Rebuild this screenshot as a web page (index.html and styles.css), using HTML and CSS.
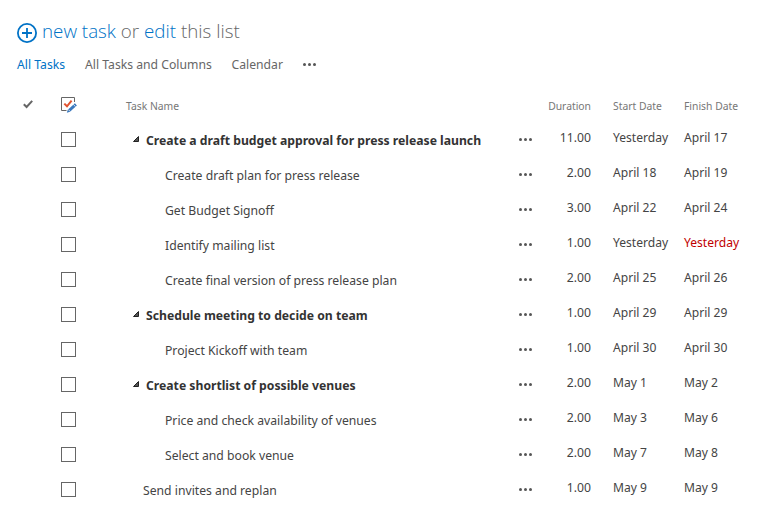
FILE: index.html
```
<!DOCTYPE html>
<html lang="en">
<head>
    <meta charset="utf-8">
    <title>Tasks</title>
    <meta name="viewport" content="width=device-width, initial-scale=1">
    <link rel="stylesheet" href="styles.css">
</head>
<body>
<svg width="0" height="0" class="defs">
    <symbol id="dots" viewBox="0 0 14 4">
        <circle cx="1.5" cy="1.5" r="1.5"/><circle cx="6.5" cy="1.5" r="1.5"/><circle cx="11.5" cy="1.5" r="1.5"/>
    </symbol>
    <symbol id="arrow" viewBox="0 0 6 6">
        <path d="M.5 5.5L5.5 .5V5.5Z" fill="#555" stroke="#222"/>
    </symbol>
</svg>

<div class="hero">
    <svg class="plus" width="20" height="20" viewBox="0 0 20 20">
        <circle cx="10" cy="10" r="9.1"/>
        <path d="M10 5v10M5 10h10"/>
    </svg>
    <div class="hero-text"><a>new task</a> or <a>edit</a> this list</div>
</div>

<div class="views">
    <a class="view-1 selected">All Tasks</a>
    <a class="view-2">All Tasks and Columns</a>
    <a class="view-3">Calendar</a>
    <svg class="dots" width="14" height="4"><use href="#dots"/></svg>
</div>

<table class="tasks">
    <colgroup>
        <col class="col-select"><col class="col-done"><col class="col-name"><col class="col-menu">
        <col class="col-duration"><col class="col-start"><col class="col-finish">
    </colgroup>
    <thead>
    <tr>
        <th class="select">
            <svg width="12" height="10" viewBox="0 0 12 10"><path d="M1.8 5.2L4.6 8L10.2 1.8" fill="none" stroke="#666" stroke-width="2"/></svg>
        </th>
        <th class="edit">
            <svg width="17" height="17" viewBox="0 0 17 17">
                <path d="M13.5 5V.5H.5v13H5.5" fill="none" stroke="#666"/>
                <path d="M3.3 6.6L6 9.3L10.6 3.6" fill="none" stroke="#e2532f" stroke-width="2"/>
                <path d="M13.9 6.2L15.9 8.4L9 14.7L5.8 15.7L6.8 12.7Z" fill="#3a78bd"/>
                <path d="M7.3 12.6L9 14.3M12.4 7.4L14.4 9.6" stroke="#fff" stroke-width=".8"/>
            </svg>
        </th>
        <th>Task Name</th>
        <th></th>
        <th class="num">Duration</th>
        <th class="start">Start Date</th>
        <th>Finish Date</th>
    </tr>
    </thead>
    <tbody>
    <tr>
        <td colspan="2" class="done"><span class="box"></span></td>
        <td class="name summary"><svg width="6" height="6"><use href="#arrow"/></svg>Create a draft budget approval for press release launch</td>
        <td><svg class="dots" width="14" height="4"><use href="#dots"/></svg></td>
        <td class="num">11.00</td><td class="date start">Yesterday</td><td class="date">April 17</td>
    </tr>
    <tr>
        <td colspan="2" class="done"><span class="box"></span></td>
        <td class="name child">Create draft plan for press release</td>
        <td><svg class="dots" width="14" height="4"><use href="#dots"/></svg></td>
        <td class="num">2.00</td><td class="date start">April 18</td><td class="date">April 19</td>
    </tr>
    <tr>
        <td colspan="2" class="done"><span class="box"></span></td>
        <td class="name child">Get Budget Signoff</td>
        <td><svg class="dots" width="14" height="4"><use href="#dots"/></svg></td>
        <td class="num">3.00</td><td class="date start">April 22</td><td class="date">April 24</td>
    </tr>
    <tr>
        <td colspan="2" class="done"><span class="box"></span></td>
        <td class="name child">Identify mailing list</td>
        <td><svg class="dots" width="14" height="4"><use href="#dots"/></svg></td>
        <td class="num">1.00</td><td class="date start">Yesterday</td><td class="date overdue">Yesterday</td>
    </tr>
    <tr>
        <td colspan="2" class="done"><span class="box"></span></td>
        <td class="name child">Create final version of press release plan</td>
        <td><svg class="dots" width="14" height="4"><use href="#dots"/></svg></td>
        <td class="num">2.00</td><td class="date start">April 25</td><td class="date">April 26</td>
    </tr>
    <tr>
        <td colspan="2" class="done"><span class="box"></span></td>
        <td class="name summary"><svg width="6" height="6"><use href="#arrow"/></svg>Schedule meeting to decide on team</td>
        <td><svg class="dots" width="14" height="4"><use href="#dots"/></svg></td>
        <td class="num">1.00</td><td class="date start">April 29</td><td class="date">April 29</td>
    </tr>
    <tr>
        <td colspan="2" class="done"><span class="box"></span></td>
        <td class="name child">Project Kickoff with team</td>
        <td><svg class="dots" width="14" height="4"><use href="#dots"/></svg></td>
        <td class="num">1.00</td><td class="date start">April 30</td><td class="date">April 30</td>
    </tr>
    <tr>
        <td colspan="2" class="done"><span class="box"></span></td>
        <td class="name summary"><svg width="6" height="6"><use href="#arrow"/></svg>Create shortlist of possible venues</td>
        <td><svg class="dots" width="14" height="4"><use href="#dots"/></svg></td>
        <td class="num">2.00</td><td class="date start">May 1</td><td class="date">May 2</td>
    </tr>
    <tr>
        <td colspan="2" class="done"><span class="box"></span></td>
        <td class="name child">Price and check availability of venues</td>
        <td><svg class="dots" width="14" height="4"><use href="#dots"/></svg></td>
        <td class="num">2.00</td><td class="date start">May 3</td><td class="date">May 6</td>
    </tr>
    <tr>
        <td colspan="2" class="done"><span class="box"></span></td>
        <td class="name child">Select and book venue</td>
        <td><svg class="dots" width="14" height="4"><use href="#dots"/></svg></td>
        <td class="num">2.00</td><td class="date start">May 7</td><td class="date">May 8</td>
    </tr>
    <tr>
        <td colspan="2" class="done"><span class="box"></span></td>
        <td class="name">Send invites and replan</td>
        <td><svg class="dots" width="14" height="4"><use href="#dots"/></svg></td>
        <td class="num">1.00</td><td class="date start">May 9</td><td class="date">May 9</td>
    </tr>
    </tbody>
</table>
</body>
</html>
```
FILE: styles.css
```
body {
    margin: 0;
    background: #fff;
    color: #444;
    font-family: "Noto Sans", "Open Sans", sans-serif;
    font-size: 12.2px;
}
svg {
    display: block;
}
.defs {
    display: none;
}
.hero {
    display: flex;
    align-items: center;
    height: 24px;
    padding: 19px 0 0 17px;
    gap: 5px;
    color: #666;
}
.plus {
    margin-top: 3px;
    fill: none;
    stroke: #0072c6;
    stroke-width: 1.8;
}
.hero-text {
    font-family: "Open Sans", sans-serif;
    font-size: 18.8px;
    font-weight: 300;
    white-space: nowrap;
}
.hero-text a, .views .selected {
    color: #0072c6;
}
.views {
    display: flex;
    align-items: center;
    height: 20px;
    padding: 11px 0 0 17px;
    color: #666;
    white-space: nowrap;
}
.view-1 {
    width: 68px;
}
.view-2 {
    width: 146.5px;
}
.view-3 {
    width: 71.5px;
}
.dots {
    fill: #555;
}
.views .dots {
    margin-top: 2px;
}
.tasks {
    width: 759px;
    margin-top: 12px;
    table-layout: fixed;
    border-collapse: collapse;
}
.col-select { width: 61px; }
.col-done { width: 65px; }
.col-name { width: 393px; }
.col-menu { width: 25px; }
.col-duration { width: 47px; }
.col-start { width: 93px; }
.col-finish { width: 75px; }
th, td {
    padding: 0;
    text-align: left;
    white-space: nowrap;
}
th {
    height: 32px;
    padding-top: 4px;
    color: #777;
    font-size: 10.35px;
    font-weight: 400;
}
td {
    height: 35px;
}
th.select {
    height: 36px;
    padding-top: 0;
    padding-left: 22px;
}
th.edit {
    height: 34px;
    padding-top: 2px;
}
.done {
    padding-left: 61px;
}
.box {
    display: block;
    width: 13px;
    height: 13px;
    border: 1px solid #666;
}
td.num, .date {
    height: 30px;
    padding-bottom: 5px;
}
.date {
    font-size: 12.1px;
}
.num {
    text-align: right;
}
.start {
    padding-left: 22px;
}
.name {
    height: 33px;
    padding-top: 2px;
    padding-left: 17px;
}
.child {
    padding-left: 39px;
}
.summary {
    padding-left: 7px;
    color: #333;
    font-weight: 700;
}
.summary svg {
    display: inline-block;
    margin-right: 7px;
    vertical-align: 3px;
}
.overdue {
    color: #bf0000;
}
```
